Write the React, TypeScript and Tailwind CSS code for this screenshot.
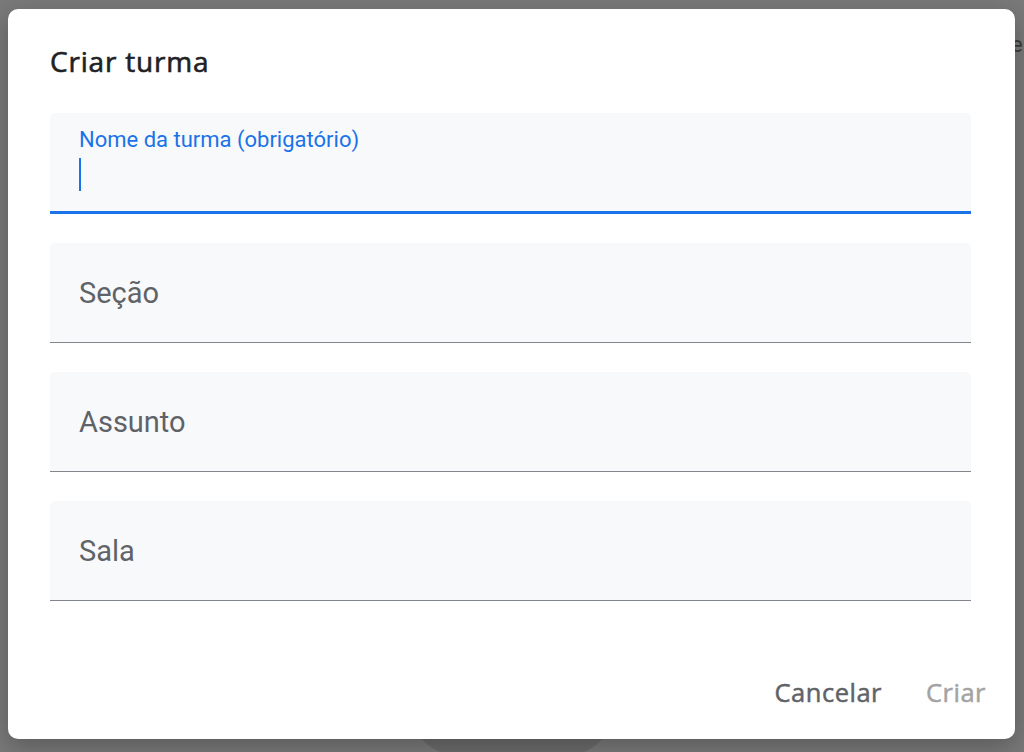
import React from "react";

const fields = ["Seção", "Assunto", "Sala"];

export default function App() {
  return (
    <div className="relative w-[1024px] h-[752px] overflow-hidden bg-[#797979] font-['Roboto',sans-serif]">
      {/* page behind the backdrop */}
      <div className="absolute left-[1011px] top-[28px] text-[22px] text-[#3c3c3c]">e</div>
      <div className="absolute left-[420px] top-[700px] w-[184px] h-[64px] rounded-[50%] bg-[#6b6b6b]"></div>

      <div className="absolute inset-0 pl-[8px] pt-[9px]">
        <div className="relative w-[1007px] h-[730px] rounded-[10px] bg-white shadow-[0_8px_24px_rgba(0,0,0,0.25)] flex flex-col pl-[42px] pr-[44px] pt-[34px]">
          <h2 className="text-[28px] leading-[36px] font-normal text-[#202124] font-['Open_Sans',sans-serif] tracking-[0.8px] [-webkit-text-stroke:0.6px_#202124]">
            Criar turma
          </h2>

          <div className="mt-[34px] flex flex-col gap-[29px]">
            <div className="h-[101px] rounded-t-[5px] bg-[#f8f9fa] border-b-[3px] border-[#1a73e8] pl-[29px] pt-[14px]">
              <div className="text-[22px] leading-[26px] text-[#1a73e8]">Nome da turma (obrigatório)</div>
              <div className="mt-[5px] w-[2px] h-[33px] bg-[#1a73e8]"></div>
            </div>
            {fields.map((f) => (
              <div
                key={f}
                className="h-[100px] rounded-t-[5px] bg-[#f8f9fa] border-b-[1.5px] border-[#80868b] pl-[29px] flex items-center"
              >
                <span className="text-[29px] leading-[36px] text-[#5f6368]">{f}</span>
              </div>
            ))}
          </div>

          <div className="mt-auto mb-[31px] flex justify-end items-center gap-[44px] mr-[-15px]">
            <button className="text-[25.5px] leading-[32px] text-[#5f6368] font-['Open_Sans',sans-serif] tracking-[0.5px] [-webkit-text-stroke:0.5px_#5f6368]">Cancelar</button>
            <button className="text-[25.5px] leading-[32px] text-[#a3a3a3] font-['Open_Sans',sans-serif] tracking-[0.5px] [-webkit-text-stroke:0.5px_#a3a3a3]">Criar</button>
          </div>
        </div>
      </div>
    </div>
  );
}
